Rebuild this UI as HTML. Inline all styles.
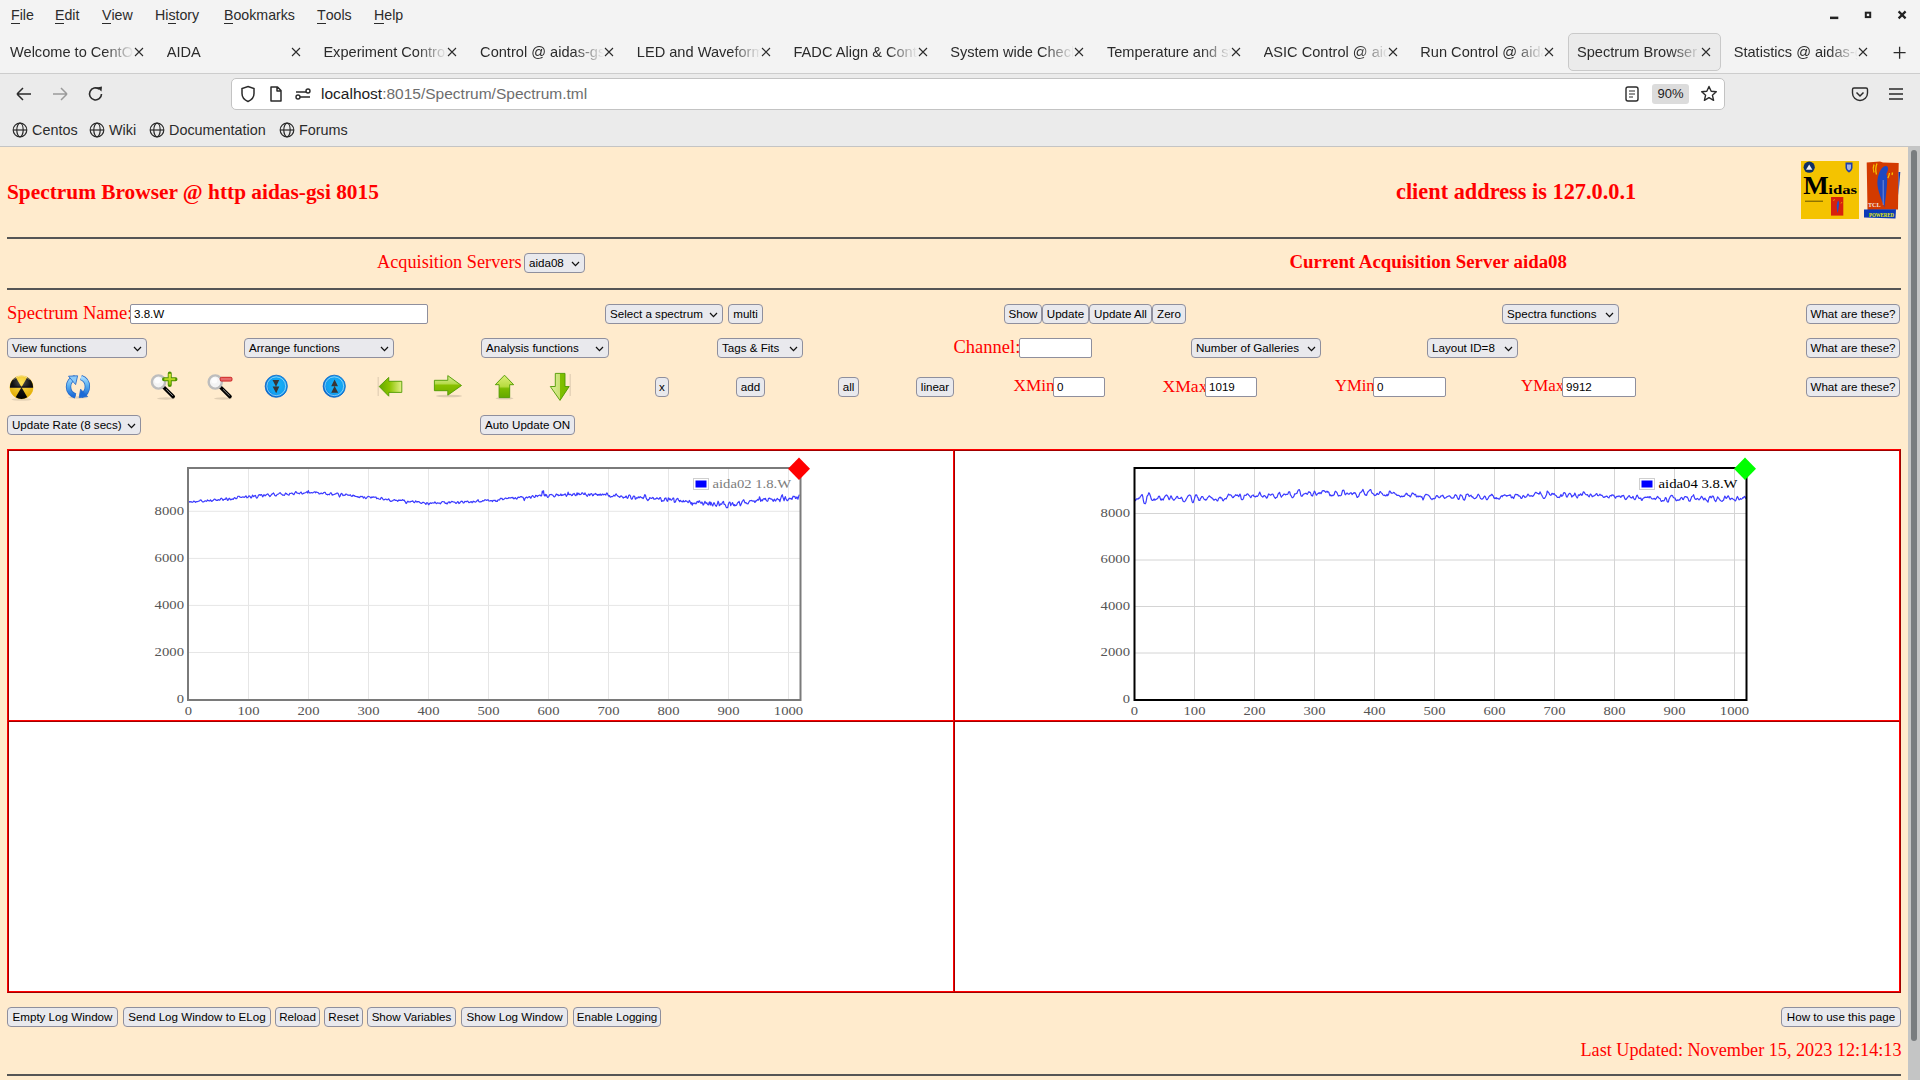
<!DOCTYPE html>
<html><head><meta charset="utf-8"><title>Spectrum Browser</title>
<style>
*{box-sizing:border-box}
html,body{margin:0;padding:0;width:1920px;height:1080px;overflow:hidden;background:#ffebcd}
body{position:relative;font-family:"Liberation Sans",sans-serif}
.a{position:absolute;white-space:nowrap}
#menubar{position:absolute;left:0;top:0;width:1920px;height:73px;background:#f3f3f3}
.mi{position:absolute;top:6px;font-size:14.2px;color:#2b2b2b;line-height:18px}
.mi u{text-decoration:none;border-bottom:1px solid #2b2b2b;display:inline-block;line-height:15px}
#tabline{position:absolute;left:0;top:73px;width:1920px;height:1px;background:#cdcdcd}
.tabt{position:absolute;top:43px;font-size:14.6px;color:#2b2b2b;width:124px;overflow:hidden;white-space:nowrap;line-height:18px;
 -webkit-mask-image:linear-gradient(to right,#000 0,#000 94px,transparent 124px);mask-image:linear-gradient(to right,#000 0,#000 94px,transparent 124px)}
.tabx{position:absolute;top:44px;width:12px;height:12px}
#acttab{position:absolute;left:1568px;top:33px;width:153px;height:38px;border:1px solid #c9c9c9;border-radius:5px;background:#ebebeb}
#navbar{position:absolute;left:0;top:74px;width:1920px;height:72px;background:#ebebeb}
#navline{position:absolute;left:0;top:146px;width:1920px;height:1px;background:#c4c4c4}
#url{position:absolute;left:231px;top:78px;width:1494px;height:32px;background:#fff;border:1px solid #c3c3c3;border-radius:5px}
.bm{position:absolute;top:121px;font-size:14.4px;color:#2b2b2b;line-height:18px}
/* page */
.red{color:#ff0000;font-family:"Liberation Serif",serif}
.h1{font-weight:bold;font-size:21.15px;line-height:24px}
.hr{position:absolute;left:7px;width:1894px;height:2px;background:#555}
.btn{position:absolute;height:20px;background:#e9e9ed;border:1px solid #8f8f9d;border-radius:4px;font-size:11.6px;color:#000;line-height:18px;text-align:center;white-space:nowrap;padding:0}
.sel{position:absolute;height:20px;background:#e9e9ed;border:1px solid #8f8f9d;border-radius:4px;font-size:11.6px;color:#000;line-height:18px;white-space:nowrap;padding-left:4px}
.sel svg{position:absolute;right:4px;top:6.5px}
.inp{position:absolute;height:20px;background:#fff;border:1px solid #8f8f9d;border-radius:2px;font-size:11.6px;color:#000;line-height:18px;white-space:nowrap;padding-left:3px}
.lab{position:absolute;font-family:"Liberation Serif",serif;color:#ff0000;font-size:18px;line-height:20px;white-space:nowrap}
#tbl{position:absolute;left:7px;top:449px;width:1894px;height:544px;border:1px solid;border-color:#ff0000 #a00000 #a00000 #ff0000;background:#fff}
.cell{position:absolute;border:1px solid;border-color:#a00000 #ff0000 #ff0000 #a00000}
svg text{font-family:"Liberation Serif",serif}
#scroll{position:absolute;left:1908px;top:147px;width:12px;height:933px;background:#c4c5c5}
#thumb{position:absolute;left:1911px;top:150px;width:6px;height:891px;background:#797d7f;border-radius:3px}
</style></head>
<body>
<!-- ================= browser chrome ================= -->
<div id="menubar"></div>
<div class="mi" style="left:11px"><u>F</u>ile</div>
<div class="mi" style="left:55px"><u>E</u>dit</div>
<div class="mi" style="left:102px"><u>V</u>iew</div>
<div class="mi" style="left:155px">Hi<u>s</u>tory</div>
<div class="mi" style="left:224px"><u>B</u>ookmarks</div>
<div class="mi" style="left:317px"><u>T</u>ools</div>
<div class="mi" style="left:374px"><u>H</u>elp</div>
<!-- window controls -->
<svg class="a" style="left:1820px;top:0" width="100" height="30" viewBox="1820 0 100 30">
 <rect x="1830" y="16.6" width="8.3" height="2.5" fill="#222"/>
 <rect x="1865.8" y="12.7" width="4.4" height="4.4" fill="none" stroke="#222" stroke-width="2"/>
 <path d="M1898.6 11.4L1905.6 18.4M1905.6 11.4L1898.6 18.4" stroke="#222" stroke-width="2.2"/>
</svg>
<div id="acttab"></div>
<div class="tabt" style="left:10.0px">Welcome to CentOS</div>
<div class="tabx" style="left:133.0px"><svg width="12" height="12" viewBox="0 0 12 12"><path d="M2 2L10 10M10 2L2 10" stroke="#2b2b2b" stroke-width="1.1"/></svg></div>
<div class="tabt" style="left:166.7px">AIDA</div>
<div class="tabx" style="left:289.7px"><svg width="12" height="12" viewBox="0 0 12 12"><path d="M2 2L10 10M10 2L2 10" stroke="#2b2b2b" stroke-width="1.1"/></svg></div>
<div class="tabt" style="left:323.4px">Experiment Control</div>
<div class="tabx" style="left:446.4px"><svg width="12" height="12" viewBox="0 0 12 12"><path d="M2 2L10 10M10 2L2 10" stroke="#2b2b2b" stroke-width="1.1"/></svg></div>
<div class="tabt" style="left:480.1px">Control @ aidas-gsi</div>
<div class="tabx" style="left:603.1px"><svg width="12" height="12" viewBox="0 0 12 12"><path d="M2 2L10 10M10 2L2 10" stroke="#2b2b2b" stroke-width="1.1"/></svg></div>
<div class="tabt" style="left:636.8px">LED and Waveform</div>
<div class="tabx" style="left:759.8px"><svg width="12" height="12" viewBox="0 0 12 12"><path d="M2 2L10 10M10 2L2 10" stroke="#2b2b2b" stroke-width="1.1"/></svg></div>
<div class="tabt" style="left:793.5px">FADC Align & Control</div>
<div class="tabx" style="left:916.5px"><svg width="12" height="12" viewBox="0 0 12 12"><path d="M2 2L10 10M10 2L2 10" stroke="#2b2b2b" stroke-width="1.1"/></svg></div>
<div class="tabt" style="left:950.2px">System wide Checks</div>
<div class="tabx" style="left:1073.2px"><svg width="12" height="12" viewBox="0 0 12 12"><path d="M2 2L10 10M10 2L2 10" stroke="#2b2b2b" stroke-width="1.1"/></svg></div>
<div class="tabt" style="left:1106.9px">Temperature and status</div>
<div class="tabx" style="left:1229.9px"><svg width="12" height="12" viewBox="0 0 12 12"><path d="M2 2L10 10M10 2L2 10" stroke="#2b2b2b" stroke-width="1.1"/></svg></div>
<div class="tabt" style="left:1263.6px">ASIC Control @ aidas</div>
<div class="tabx" style="left:1386.6px"><svg width="12" height="12" viewBox="0 0 12 12"><path d="M2 2L10 10M10 2L2 10" stroke="#2b2b2b" stroke-width="1.1"/></svg></div>
<div class="tabt" style="left:1420.3px">Run Control @ aidas</div>
<div class="tabx" style="left:1543.3px"><svg width="12" height="12" viewBox="0 0 12 12"><path d="M2 2L10 10M10 2L2 10" stroke="#2b2b2b" stroke-width="1.1"/></svg></div>
<div class="tabt" style="left:1577.0px">Spectrum Browser</div>
<div class="tabx" style="left:1700.0px"><svg width="12" height="12" viewBox="0 0 12 12"><path d="M2 2L10 10M10 2L2 10" stroke="#2b2b2b" stroke-width="1.1"/></svg></div>
<div class="tabt" style="left:1733.7px">Statistics @ aidas-gsi</div>
<div class="tabx" style="left:1856.7px"><svg width="12" height="12" viewBox="0 0 12 12"><path d="M2 2L10 10M10 2L2 10" stroke="#2b2b2b" stroke-width="1.1"/></svg></div>
<svg class="a" style="left:1891px;top:44px" width="16" height="16"><path d="M8.6 2.7V14.7M2.6 8.7H14.6" stroke="#2b2b2b" stroke-width="1.3"/></svg>
<div id="tabline"></div>
<div id="navbar"></div>
<!-- back / forward / reload -->
<svg class="a" style="left:14px;top:85px" width="20" height="18" viewBox="0 0 20 18"><path d="M3 9H17M3 9L9 3M3 9L9 15" stroke="#2b2b2b" stroke-width="1.5" fill="none"/></svg>
<svg class="a" style="left:50px;top:85px" width="20" height="18" viewBox="0 0 20 18"><path d="M17 9H3M17 9L11 3M17 9L11 15" stroke="#9a9a9a" stroke-width="1.5" fill="none"/></svg>
<svg class="a" style="left:86px;top:84px" width="20" height="20" viewBox="0 0 20 20"><path d="M15.5 10A6 6 0 1 1 13.2 5.2" stroke="#2b2b2b" stroke-width="1.6" fill="none"/><path d="M11 3.5L16 2.5L15.5 7.5Z" fill="#2b2b2b"/></svg>
<div id="url"></div>
<svg class="a" style="left:238px;top:84px" width="20" height="20" viewBox="0 0 20 20"><path d="M10 2.5L16 4.5V9.5C16 13.5 13.5 16 10 17.5C6.5 16 4 13.5 4 9.5V4.5Z" stroke="#2b2b2b" stroke-width="1.5" fill="none"/></svg>
<svg class="a" style="left:266px;top:84px" width="20" height="20" viewBox="0 0 20 20"><path d="M5 3H11.5L15 6.5V17H5Z M11 3V7H15" stroke="#2b2b2b" stroke-width="1.5" fill="none" stroke-linejoin="round"/></svg>
<svg class="a" style="left:293px;top:84px" width="20" height="20" viewBox="0 0 20 20"><path d="M3 8H13M7 13H17" stroke="#2b2b2b" stroke-width="1.5"/><circle cx="15" cy="7" r="2" stroke="#2b2b2b" stroke-width="1.4" fill="none"/><circle cx="5" cy="13" r="2" stroke="#2b2b2b" stroke-width="1.4" fill="none"/></svg>
<div class="a" style="left:321px;top:85px;font-size:15.5px;line-height:18px;color:#1c1b22">localhost<span style="color:#6d6d6d">:8015/Spectrum/Spectrum.tml</span></div>
<svg class="a" style="left:1622px;top:84px" width="20" height="20" viewBox="0 0 20 20"><rect x="4" y="3" width="12" height="14" rx="2" stroke="#2b2b2b" stroke-width="1.4" fill="none"/><path d="M7 7H13M7 10H13M7 13H11" stroke="#2b2b2b" stroke-width="1.2"/></svg>
<div class="a" style="left:1652px;top:84px;width:37px;height:20px;background:#dcdcdc;border-radius:3px;font-size:13px;line-height:20px;text-align:center;color:#1c1b22">90%</div>
<svg class="a" style="left:1699px;top:84px" width="20" height="20" viewBox="0 0 20 20"><path d="M10 2.5L12.2 7.3L17.3 7.8L13.4 11.2L14.6 16.3L10 13.6L5.4 16.3L6.6 11.2L2.7 7.8L7.8 7.3Z" stroke="#2b2b2b" stroke-width="1.4" fill="none" stroke-linejoin="round"/></svg>
<svg class="a" style="left:1850px;top:84px" width="20" height="20" viewBox="0 0 20 20"><path d="M4 4H16A1.5 1.5 0 0 1 17.5 5.5V9A7.5 7.5 0 0 1 2.5 9V5.5A1.5 1.5 0 0 1 4 4Z" stroke="#2b2b2b" stroke-width="1.4" fill="none"/><path d="M6.5 8.5L10 12L13.5 8.5" stroke="#2b2b2b" stroke-width="1.5" fill="none"/></svg>
<svg class="a" style="left:1886px;top:84px" width="20" height="20" viewBox="0 0 20 20"><path d="M3 5H17M3 10H17M3 15H17" stroke="#2b2b2b" stroke-width="1.5"/></svg>
<!-- bookmarks -->
<svg class="a" style="left:12px;top:122px" width="16" height="16" viewBox="0 0 16 16"><g stroke="#2b2b2b" stroke-width="1.2" fill="none"><circle cx="8" cy="8" r="6.8"/><ellipse cx="8" cy="8" rx="3.2" ry="6.8"/><path d="M1.2 8H14.8"/></g></svg>
<div class="bm" style="left:32px">Centos</div>
<svg class="a" style="left:89px;top:122px" width="16" height="16" viewBox="0 0 16 16"><g stroke="#2b2b2b" stroke-width="1.2" fill="none"><circle cx="8" cy="8" r="6.8"/><ellipse cx="8" cy="8" rx="3.2" ry="6.8"/><path d="M1.2 8H14.8"/></g></svg>
<div class="bm" style="left:109px">Wiki</div>
<svg class="a" style="left:149px;top:122px" width="16" height="16" viewBox="0 0 16 16"><g stroke="#2b2b2b" stroke-width="1.2" fill="none"><circle cx="8" cy="8" r="6.8"/><ellipse cx="8" cy="8" rx="3.2" ry="6.8"/><path d="M1.2 8H14.8"/></g></svg>
<div class="bm" style="left:169px">Documentation</div>
<svg class="a" style="left:279px;top:122px" width="16" height="16" viewBox="0 0 16 16"><g stroke="#2b2b2b" stroke-width="1.2" fill="none"><circle cx="8" cy="8" r="6.8"/><ellipse cx="8" cy="8" rx="3.2" ry="6.8"/><path d="M1.2 8H14.8"/></g></svg>
<div class="bm" style="left:299px">Forums</div>
<div id="navline"></div>

<!-- ================= page ================= -->
<div class="a red h1" style="left:7px;top:180px;font-size:21.35px">Spectrum Browser @ http aidas-gsi 8015</div>
<div class="a red h1" style="left:1396px;top:180px;font-size:22.34px">client address is 127.0.0.1</div>
<!-- logos -->
<svg class="a" style="left:1790px;top:150px" width="118" height="80" viewBox="1790 150 118 80">
 <rect x="1801" y="161" width="58" height="58" fill="#f4c300"/>
 <circle cx="1809.2" cy="167.2" r="5.6" fill="#0f2f66"/>
 <path d="M1806 169.8L1809.2 164.6L1812.4 169.8Z" fill="#f0f0f0"/>
 <path d="M1845.5 162.5H1852.5V167.5C1852.5 170.5 1849 172.5 1849 172.5C1849 172.5 1845.5 170.5 1845.5 167.5Z" fill="#1d3fb0"/>
 <path d="M1847 164.5H1851V167.8C1851 169.5 1849 170.6 1849 170.6C1849 170.6 1847 169.5 1847 167.8Z" fill="#fff" opacity="0.6"/>
 <text x="1803.2" y="193.7" font-family="Liberation Serif" font-weight="bold" font-size="26" fill="#000" textLength="25.5" lengthAdjust="spacingAndGlyphs">M</text>
 <text x="1828.3" y="193.7" font-family="Liberation Sans" font-weight="bold" font-size="13.2" fill="#000" textLength="28.8" lengthAdjust="spacingAndGlyphs">idas</text>
 <rect x="1805" y="200.6" width="18" height="1.3" fill="#3a3000" opacity="0.6"/>
 <rect x="1831" y="197" width="12.3" height="18.6" fill="#d8200c"/>
 <path d="M1838.2 200.5C1839.8 202 1839 207 1837.6 213C1836.6 208 1836 204 1838.2 200.5Z" fill="#2a4cc0"/>
 <path d="M1833.5 201L1834.5 199M1841 203.5L1842 202" stroke="#f0c000" stroke-width="0.7"/>
 <path d="M1866.7 162.5L1880 161.5L1883 162.5L1898.7 163L1898 209.5L1867.5 210Z" fill="#d33a00"/>
 <path d="M1864 209.5L1896 209.3L1895.5 218.5L1864 217.5Z" fill="#0a3ab8"/>
 <path d="M1898.5 172L1900.3 172L1898.4 195Z" fill="#0a3ab8"/>
 <path d="M1886 166C1889 166.5 1888.5 170 1886.2 174.5C1888 175.5 1887.5 186 1884.5 207.5C1880 196 1876.5 187 1877.5 180C1878.5 172 1882 166 1886 166Z" fill="#1f48c0"/>
 <path d="M1883.2 180V205" stroke="#c8d0f0" stroke-width="0.5"/>
 <path d="M1874 164.5C1873 167 1873 170 1874 172.5M1877 163.5C1875.5 167 1875.5 171 1876.5 174.5M1889.5 173C1889.2 175 1888.6 177 1887.8 178M1892.5 172.5L1892 175" stroke="#f6c400" stroke-width="1.3" fill="none"/>
 <text x="1868" y="207.3" font-family="Liberation Sans" font-weight="bold" font-size="6" fill="#f4e8e0" textLength="12.7" lengthAdjust="spacingAndGlyphs">TCL</text>
 <text x="1869" y="216.8" font-family="Liberation Sans" font-weight="bold" font-size="6" fill="#e8f000" textLength="25" lengthAdjust="spacingAndGlyphs">POWERED</text>
</svg>
<div class="hr" style="top:237px"></div>
<div class="lab" style="left:377px;top:252px;font-size:18.27px">Acquisition Servers</div>
<div class="sel" style="left:524px;top:253px;width:61px">aida08<svg width="9" height="6" viewBox="0 0 9 6"><path d="M1 1L4.5 4.6L8 1" stroke="#111" stroke-width="1.25" fill="none"/></svg></div>
<div class="a red h1" style="left:1289.5px;top:250px;font-size:18.88px">Current Acquisition Server aida08</div>
<div class="hr" style="top:288px"></div>

<!-- row 1 -->
<div class="lab" style="left:7px;top:303px;font-size:18.6px">Spectrum Name:</div>
<div class="inp" style="left:130px;top:304px;width:298px">3.8.W</div>
<div class="sel" style="left:605px;top:304px;width:118px">Select a spectrum<svg width="9" height="6" viewBox="0 0 9 6"><path d="M1 1L4.5 4.6L8 1" stroke="#111" stroke-width="1.25" fill="none"/></svg></div>
<div class="btn" style="left:728px;top:304px;width:35px">multi</div>
<div class="btn" style="left:1004px;top:304px;width:38px">Show</div>
<div class="btn" style="left:1042px;top:304px;width:47px">Update</div>
<div class="btn" style="left:1089px;top:304px;width:63px">Update All</div>
<div class="btn" style="left:1152px;top:304px;width:34px">Zero</div>
<div class="sel" style="left:1502px;top:304px;width:117px">Spectra functions<svg width="9" height="6" viewBox="0 0 9 6"><path d="M1 1L4.5 4.6L8 1" stroke="#111" stroke-width="1.25" fill="none"/></svg></div>
<div class="btn" style="left:1806px;top:304px;width:94px">What are these?</div>

<!-- row 2 -->
<div class="sel" style="left:7px;top:338px;width:140px">View functions<svg width="9" height="6" viewBox="0 0 9 6"><path d="M1 1L4.5 4.6L8 1" stroke="#111" stroke-width="1.25" fill="none"/></svg></div>
<div class="sel" style="left:244px;top:338px;width:150px">Arrange functions<svg width="9" height="6" viewBox="0 0 9 6"><path d="M1 1L4.5 4.6L8 1" stroke="#111" stroke-width="1.25" fill="none"/></svg></div>
<div class="sel" style="left:481px;top:338px;width:128px">Analysis functions<svg width="9" height="6" viewBox="0 0 9 6"><path d="M1 1L4.5 4.6L8 1" stroke="#111" stroke-width="1.25" fill="none"/></svg></div>
<div class="sel" style="left:717px;top:338px;width:86px">Tags &amp; Fits<svg width="9" height="6" viewBox="0 0 9 6"><path d="M1 1L4.5 4.6L8 1" stroke="#111" stroke-width="1.25" fill="none"/></svg></div>
<div class="lab" style="left:953.5px;top:337px;font-size:18.5px">Channel:</div>
<div class="inp" style="left:1019px;top:338px;width:73px"></div>
<div class="sel" style="left:1191px;top:338px;width:130px">Number of Galleries<svg width="9" height="6" viewBox="0 0 9 6"><path d="M1 1L4.5 4.6L8 1" stroke="#111" stroke-width="1.25" fill="none"/></svg></div>
<div class="sel" style="left:1427px;top:338px;width:91px">Layout ID=8<svg width="9" height="6" viewBox="0 0 9 6"><path d="M1 1L4.5 4.6L8 1" stroke="#111" stroke-width="1.25" fill="none"/></svg></div>
<div class="btn" style="left:1806px;top:338px;width:94px">What are these?</div>

<!-- row 3 icons -->
<svg class="a" style="left:0;top:360px" width="600" height="50" viewBox="0 360 600 50">
 <defs>
  <radialGradient id="gy" cx="50%" cy="30%" r="70%"><stop offset="0" stop-color="#ffe45a"/><stop offset="1" stop-color="#e0a800"/></radialGradient>
  <radialGradient id="gk" cx="50%" cy="20%" r="80%"><stop offset="0" stop-color="#555"/><stop offset="0.5" stop-color="#111"/><stop offset="1" stop-color="#000"/></radialGradient>
  <linearGradient id="gb" x1="0" y1="0" x2="0" y2="1"><stop offset="0" stop-color="#a8dcff"/><stop offset="0.45" stop-color="#5ab0f0"/><stop offset="1" stop-color="#1a6ad8"/></linearGradient>
  <radialGradient id="gc" cx="55%" cy="45%" r="55%"><stop offset="0" stop-color="#18b4f8"/><stop offset="0.75" stop-color="#12a0f0"/><stop offset="1" stop-color="#0a6ad0"/></radialGradient>
  <linearGradient id="ggl" x1="0" y1="0" x2="1" y2="0"><stop offset="0" stop-color="#62a800"/><stop offset="0.45" stop-color="#8cc400"/><stop offset="1" stop-color="#e4f08a"/></linearGradient>
  <linearGradient id="ggr" x1="0" y1="0" x2="0" y2="1"><stop offset="0" stop-color="#d8ec98"/><stop offset="0.4" stop-color="#b8dc50"/><stop offset="0.5" stop-color="#88c000"/><stop offset="1" stop-color="#72b000"/></linearGradient>
  <linearGradient id="ggu" x1="0" y1="0" x2="0" y2="1"><stop offset="0" stop-color="#dcee78"/><stop offset="0.5" stop-color="#b8dc40"/><stop offset="0.6" stop-color="#7cbc00"/><stop offset="1" stop-color="#64a800"/></linearGradient>
  <linearGradient id="ggd" x1="0" y1="0" x2="1" y2="0"><stop offset="0" stop-color="#e0f0a0"/><stop offset="0.5" stop-color="#c8e070"/><stop offset="0.52" stop-color="#80c000"/><stop offset="1" stop-color="#78b800"/></linearGradient>
  <linearGradient id="ggp" x1="0" y1="0" x2="0" y2="1"><stop offset="0" stop-color="#e8f040"/><stop offset="1" stop-color="#88c000"/></linearGradient>
 </defs>
 <!-- radiation -->
 <ellipse cx="21.5" cy="399.5" rx="10" ry="1.3" fill="#000" opacity="0.10"/>
 <circle cx="21.5" cy="387.3" r="11.6" fill="url(#gy)" stroke="#e8b800" stroke-width="0.5"/>
 <path d="M21.5 387.3L33.1 387.3A11.6 11.6 0 0 0 27.3 377.25Z M21.5 387.3L15.7 377.25A11.6 11.6 0 0 0 9.9 387.3Z M21.5 387.3L15.7 397.35A11.6 11.6 0 0 0 27.3 397.35Z" fill="url(#gk)"/>
 <rect x="10" y="386.5" width="23" height="1.3" fill="#0a0a20" opacity="0.85"/>
 <path d="M13.5 380A10 10 0 0 1 29.5 380" stroke="#fff" stroke-width="0.9" fill="none" opacity="0.45"/>
 <!-- refresh -->
 <ellipse cx="78" cy="397.5" rx="10" ry="1.2" fill="#000" opacity="0.10"/>
 <path d="M75.2 377.6A9.6 9.6 0 0 0 75.5 396" stroke="#2a6cc8" stroke-width="5.4" fill="none"/>
 <path d="M75.2 377.6A9.6 9.6 0 0 0 75.5 396" stroke="url(#gb)" stroke-width="3.8" fill="none"/>
 <path d="M68.5 376.2L77.6 375.8L75.6 384.6Z" fill="#8ccaf8" stroke="#2a6cc8" stroke-width="0.9" stroke-linejoin="round"/>
 <path d="M81 377.5A9.6 9.6 0 0 1 81.2 395.5" stroke="#2a6cc8" stroke-width="5.4" fill="none"/>
 <path d="M81 377.5A9.6 9.6 0 0 1 81.2 395.5" stroke="url(#gb)" stroke-width="3.8" fill="none"/>
 <path d="M79.2 397.6L87.6 396.5L80.6 389.2Z" fill="#1a6ad8" stroke="#2a6cc8" stroke-width="0.9" stroke-linejoin="round"/>
 <!-- zoom in -->
 <ellipse cx="166" cy="398.5" rx="9" ry="1.2" fill="#000" opacity="0.12"/>
 <path d="M163.5 387L173.2 396.6" stroke="#000" stroke-width="3.6" stroke-linecap="round"/>
 <path d="M166.2 389.3L172.8 395.8" stroke="#fff" stroke-width="0.8" opacity="0.7"/>
 <circle cx="158.5" cy="382" r="6.6" fill="#f4f4f4" stroke="#bdbdbd" stroke-width="2.4"/>
 <circle cx="157.5" cy="380.5" r="3" fill="#fff" opacity="0.8"/>
 <path d="M169.75 373.5V385M164 379.25H175.5" stroke="#4c9000" stroke-width="4" stroke-linecap="round"/>
 <path d="M169.75 373.8V384.7M164.3 379.25H175.2" stroke="url(#ggp)" stroke-width="2.2"/>
 <!-- zoom out -->
 <ellipse cx="223" cy="398.5" rx="9" ry="1.2" fill="#000" opacity="0.12"/>
 <path d="M220.3 387L230 396.6" stroke="#000" stroke-width="3.6" stroke-linecap="round"/>
 <path d="M223 389.3L229.6 395.8" stroke="#fff" stroke-width="0.8" opacity="0.7"/>
 <circle cx="215.25" cy="382" r="6.6" fill="#f4f4f4" stroke="#bdbdbd" stroke-width="2.4"/>
 <circle cx="214.3" cy="380.5" r="3" fill="#fff" opacity="0.8"/>
 <rect x="220.2" y="377.3" width="11.8" height="3.8" rx="1.2" fill="#e86a6a" stroke="#c81818" stroke-width="0.9"/>
 <!-- blue down -->
 <circle cx="276.25" cy="386.25" r="11.1" fill="url(#gc)" stroke="#0a64c8" stroke-width="0.8"/>
 <circle cx="276.25" cy="386.25" r="9.4" fill="none" stroke="#c8ecff" stroke-width="0.7" opacity="0.9"/>
 <path d="M272.5 380H279.2L276 386.8Z M272.6 386.4H279.3L276.2 393.2Z" fill="#3a3535"/>
 <!-- blue up -->
 <circle cx="334.25" cy="386.25" r="11.1" fill="url(#gc)" stroke="#0a64c8" stroke-width="0.8"/>
 <circle cx="334.25" cy="386.25" r="9.4" fill="none" stroke="#c8ecff" stroke-width="0.7" opacity="0.9"/>
 <path d="M331.2 386.3H338L334.6 379.6Z M331.2 392.8H338.2L334.6 386Z" fill="#3a3535"/>
 <!-- left arrow -->
 <rect x="377.6" y="377" width="1.2" height="19" fill="#000" opacity="0.12"/>
 <path d="M379.2 386.5L388.75 377.4V381.3H401.8V392.4H388.75V396.2Z" fill="url(#ggl)" stroke="#4e9a00" stroke-width="0.9" stroke-linejoin="round"/>
 <!-- right arrow -->
 <ellipse cx="449" cy="396" rx="13" ry="1.3" fill="#000" opacity="0.13"/>
 <path d="M461.5 385.5L447.8 375.6V380.3H434.4V390.7H447.8V395.2Z" fill="url(#ggr)" stroke="#4e9a00" stroke-width="0.9" stroke-linejoin="round"/>
 <!-- up arrow -->
 <ellipse cx="504.5" cy="398.3" rx="9" ry="1.2" fill="#000" opacity="0.13"/>
 <path d="M504.5 375.2L513.7 384.7H509.7V397.6H499.1V384.7H495.3Z" fill="url(#ggu)" stroke="#4e9a00" stroke-width="0.9" stroke-linejoin="round"/>
 <!-- down arrow -->
 <rect x="569.6" y="374" width="1.2" height="22" fill="#000" opacity="0.12"/>
 <path d="M560 400.4L569.2 386.5H565V373.4H555.3V386.5H550.3Z" fill="url(#ggd)" stroke="#4e9a00" stroke-width="0.9" stroke-linejoin="round"/>
</svg>
<div class="btn" style="left:655px;top:377px;width:14px">x</div>
<div class="btn" style="left:736px;top:377px;width:29px">add</div>
<div class="btn" style="left:838px;top:377px;width:21px">all</div>
<div class="btn" style="left:916px;top:377px;width:38px">linear</div>
<div class="lab" style="left:1013.5px;top:376px;font-size:17.2px">XMin</div>
<div class="inp" style="left:1053px;top:377px;width:52px">0</div>
<div class="lab" style="left:1162.5px;top:376px;font-size:17.6px">XMax</div>
<div class="inp" style="left:1205px;top:377px;width:52px">1019</div>
<div class="lab" style="left:1335px;top:376px;font-size:16.6px">YMin</div>
<div class="inp" style="left:1373px;top:377px;width:73px">0</div>
<div class="lab" style="left:1521px;top:376px;font-size:16.9px">YMax</div>
<div class="inp" style="left:1562px;top:377px;width:74px">9912</div>
<div class="btn" style="left:1806px;top:377px;width:94px">What are these?</div>

<!-- row 4 -->
<div class="sel" style="left:7px;top:415px;width:134px">Update Rate (8 secs)<svg width="9" height="6" viewBox="0 0 9 6"><path d="M1 1L4.5 4.6L8 1" stroke="#111" stroke-width="1.25" fill="none"/></svg></div>
<div class="btn" style="left:480px;top:415px;width:95px">Auto Update ON</div>

<!-- ================= gallery table ================= -->
<div id="tbl"></div>
<div class="cell" style="left:8px;top:450px;width:946px;height:271px"></div>
<div class="cell" style="left:954px;top:450px;width:946px;height:271px"></div>
<div class="cell" style="left:8px;top:721px;width:946px;height:271px"></div>
<div class="cell" style="left:954px;top:721px;width:946px;height:271px"></div>

<svg class="a" style="left:0;top:0" width="1920" height="1080" viewBox="0 0 1920 1080">
 <g><line x1="248.5" y1="467.5" x2="248.5" y2="699.5" stroke="#e6e6e6" stroke-width="1"/>
<line x1="308.5" y1="467.5" x2="308.5" y2="699.5" stroke="#e6e6e6" stroke-width="1"/>
<line x1="368.5" y1="467.5" x2="368.5" y2="699.5" stroke="#e6e6e6" stroke-width="1"/>
<line x1="428.5" y1="467.5" x2="428.5" y2="699.5" stroke="#e6e6e6" stroke-width="1"/>
<line x1="488.5" y1="467.5" x2="488.5" y2="699.5" stroke="#e6e6e6" stroke-width="1"/>
<line x1="548.5" y1="467.5" x2="548.5" y2="699.5" stroke="#e6e6e6" stroke-width="1"/>
<line x1="608.5" y1="467.5" x2="608.5" y2="699.5" stroke="#e6e6e6" stroke-width="1"/>
<line x1="668.5" y1="467.5" x2="668.5" y2="699.5" stroke="#e6e6e6" stroke-width="1"/>
<line x1="728.5" y1="467.5" x2="728.5" y2="699.5" stroke="#e6e6e6" stroke-width="1"/>
<line x1="788.5" y1="467.5" x2="788.5" y2="699.5" stroke="#e6e6e6" stroke-width="1"/>
<line x1="188" y1="652.5" x2="800.5" y2="652.5" stroke="#e6e6e6" stroke-width="1"/>
<line x1="188" y1="605.4" x2="800.5" y2="605.4" stroke="#e6e6e6" stroke-width="1"/>
<line x1="188" y1="558.4" x2="800.5" y2="558.4" stroke="#e6e6e6" stroke-width="1"/>
<line x1="188" y1="511.3" x2="800.5" y2="511.3" stroke="#e6e6e6" stroke-width="1"/></g>
 <g><line x1="1194.5" y1="467.5" x2="1194.5" y2="699.5" stroke="#d4d4d4" stroke-width="1"/>
<line x1="1254.5" y1="467.5" x2="1254.5" y2="699.5" stroke="#d4d4d4" stroke-width="1"/>
<line x1="1314.5" y1="467.5" x2="1314.5" y2="699.5" stroke="#d4d4d4" stroke-width="1"/>
<line x1="1374.5" y1="467.5" x2="1374.5" y2="699.5" stroke="#d4d4d4" stroke-width="1"/>
<line x1="1434.5" y1="467.5" x2="1434.5" y2="699.5" stroke="#d4d4d4" stroke-width="1"/>
<line x1="1494.5" y1="467.5" x2="1494.5" y2="699.5" stroke="#d4d4d4" stroke-width="1"/>
<line x1="1554.5" y1="467.5" x2="1554.5" y2="699.5" stroke="#d4d4d4" stroke-width="1"/>
<line x1="1614.5" y1="467.5" x2="1614.5" y2="699.5" stroke="#d4d4d4" stroke-width="1"/>
<line x1="1674.5" y1="467.5" x2="1674.5" y2="699.5" stroke="#d4d4d4" stroke-width="1"/>
<line x1="1734.5" y1="467.5" x2="1734.5" y2="699.5" stroke="#d4d4d4" stroke-width="1"/>
<line x1="1134" y1="653.0" x2="1746.5" y2="653.0" stroke="#d4d4d4" stroke-width="1"/>
<line x1="1134" y1="606.5" x2="1746.5" y2="606.5" stroke="#d4d4d4" stroke-width="1"/>
<line x1="1134" y1="560.0" x2="1746.5" y2="560.0" stroke="#d4d4d4" stroke-width="1"/>
<line x1="1134" y1="513.5" x2="1746.5" y2="513.5" stroke="#d4d4d4" stroke-width="1"/></g>
 <polyline points="188.3,502.00 188.9,501.79 189.5,502.08 190.1,501.57 190.7,501.88 191.3,501.70 191.9,502.18 192.5,502.28 193.1,501.96 193.7,501.15 194.3,501.37 194.9,501.62 195.5,502.36 196.1,501.83 196.7,501.62 197.3,501.56 197.9,501.43 198.5,501.27 199.1,501.14 199.7,500.64 200.3,500.01 200.9,499.92 201.5,500.54 202.1,501.54 202.7,501.89 203.3,501.89 203.9,501.61 204.5,501.30 205.1,500.83 205.7,500.81 206.3,501.43 206.9,500.83 207.5,499.91 208.1,500.70 208.7,500.71 209.3,500.84 209.9,500.87 210.5,499.78 211.1,500.71 211.7,501.47 212.3,500.95 212.9,500.59 213.5,500.08 214.1,499.23 214.7,499.05 215.3,499.42 215.9,500.16 216.5,500.45 217.1,500.13 217.7,500.45 218.3,499.70 218.9,499.79 219.5,500.26 220.1,499.87 220.7,498.60 221.3,498.11 221.9,498.66 222.5,499.42 223.1,500.40 223.7,499.64 224.3,499.20 224.9,499.38 225.5,499.21 226.1,497.81 226.7,498.33 227.3,499.96 227.9,500.45 228.5,499.31 229.1,498.44 229.7,498.35 230.3,499.69 230.9,499.82 231.5,499.22 232.1,499.40 232.7,498.82 233.3,499.27 233.9,498.44 234.5,497.67 235.1,497.87 235.7,498.60 236.3,498.71 236.9,498.36 237.5,496.87 238.1,496.27 238.7,496.24 239.3,496.40 239.9,497.11 240.5,497.14 241.1,497.52 241.7,497.43 242.3,496.99 242.9,496.87 243.5,497.05 244.1,497.44 244.7,497.00 245.3,496.62 245.9,495.83 246.5,496.84 247.1,497.84 247.7,497.52 248.3,496.79 248.9,495.86 249.5,496.04 250.1,496.49 250.7,497.85 251.3,497.82 251.9,496.84 252.5,495.12 253.1,495.99 253.7,496.59 254.3,495.85 254.9,495.98 255.5,495.34 256.1,497.43 256.7,498.12 257.3,497.74 257.9,496.80 258.5,495.05 259.1,494.90 259.7,494.52 260.3,495.35 260.9,494.69 261.5,494.50 262.1,495.63 262.7,496.84 263.3,495.98 263.9,494.68 264.5,495.09 265.1,495.78 265.7,495.24 266.3,494.69 266.9,494.37 267.5,493.97 268.1,493.98 268.7,495.09 269.3,495.71 269.9,496.59 270.5,495.99 271.1,495.17 271.7,494.19 272.3,494.05 272.9,493.59 273.5,492.97 274.1,493.89 274.7,495.23 275.3,495.76 275.9,496.05 276.5,495.56 277.1,494.54 277.7,494.25 278.3,494.07 278.9,493.62 279.5,492.98 280.1,492.68 280.7,493.40 281.3,494.17 281.9,494.27 282.5,495.11 283.1,495.11 283.7,495.07 284.3,495.35 284.9,494.50 285.5,493.08 286.1,493.56 286.7,493.62 287.3,494.55 287.9,494.79 288.5,495.04 289.1,495.03 289.7,493.41 290.3,493.52 290.9,493.33 291.5,493.07 292.1,493.06 292.7,493.74 293.3,494.35 293.9,494.70 294.5,493.38 295.1,492.70 295.7,491.56 296.3,491.98 296.9,493.03 297.5,493.04 298.1,493.25 298.7,493.39 299.3,493.84 299.9,493.19 300.5,492.48 301.1,492.10 301.7,493.31 302.3,494.08 302.9,493.70 303.5,493.33 304.1,493.06 304.7,492.98 305.3,492.77 305.9,492.55 306.5,491.93 307.1,491.80 307.7,493.08 308.3,490.62 308.9,491.93 309.5,492.97 310.1,492.79 310.7,492.93 311.3,492.59 311.9,492.71 312.5,492.95 313.1,492.61 313.7,492.23 314.3,491.93 314.9,491.77 315.5,492.77 316.1,491.97 316.7,492.11 317.3,492.31 317.9,492.46 318.5,492.92 319.1,493.83 319.7,493.92 320.3,493.64 320.9,493.14 321.5,493.09 322.1,493.77 322.7,493.69 323.3,493.05 323.9,492.49 324.5,492.33 325.1,492.23 325.7,493.53 326.3,494.30 326.9,494.25 327.5,494.90 328.1,494.37 328.7,494.49 329.3,494.79 329.9,493.79 330.5,492.87 331.1,492.75 331.7,493.90 332.3,495.14 332.9,494.51 333.5,494.82 334.1,494.52 334.7,494.18 335.3,493.91 335.9,493.91 336.5,493.21 337.1,493.05 337.7,493.01 338.3,493.93 338.9,495.57 339.5,497.02 340.1,496.13 340.7,494.22 341.3,493.59 341.9,493.37 342.5,494.93 343.1,495.59 343.7,495.01 344.3,495.22 344.9,495.39 345.5,494.36 346.1,494.04 346.7,494.27 347.3,494.73 347.9,495.14 348.5,495.14 349.1,495.33 349.7,495.11 350.3,494.75 350.9,495.82 351.5,496.27 352.1,496.40 352.7,495.34 353.3,495.20 353.9,495.97 354.5,495.58 355.1,496.32 355.7,496.32 356.3,496.55 356.9,496.50 357.5,496.61 358.1,497.27 358.7,496.98 359.3,497.61 359.9,497.02 360.5,496.28 361.1,496.73 361.7,496.43 362.3,496.42 362.9,497.20 363.5,498.05 364.1,496.96 364.7,497.01 365.3,498.12 365.9,498.69 366.5,498.08 367.1,497.21 367.7,496.82 368.3,496.31 368.9,496.46 369.5,496.80 370.1,497.06 370.7,497.90 371.3,497.79 371.9,496.82 372.5,497.37 373.1,497.04 373.7,496.94 374.3,497.15 374.9,497.28 375.5,497.01 376.1,497.17 376.7,498.71 377.3,498.52 377.9,498.19 378.5,498.67 379.1,499.01 379.7,499.21 380.3,499.37 380.9,498.00 381.5,497.42 382.1,497.92 382.7,498.75 383.3,499.77 383.9,499.99 384.5,499.54 385.1,499.28 385.7,499.12 386.3,499.34 386.9,499.85 387.5,499.71 388.1,499.24 388.7,498.89 389.3,499.82 389.9,500.83 390.5,501.29 391.1,501.32 391.7,501.24 392.3,500.73 392.9,500.72 393.5,499.97 394.1,499.81 394.7,499.64 395.3,500.33 395.9,500.29 396.5,500.30 397.1,500.59 397.7,501.35 398.3,500.76 398.9,499.96 399.5,500.40 400.1,500.00 400.7,500.37 401.3,500.27 401.9,500.34 402.5,499.53 403.1,500.19 403.7,500.38 404.3,500.14 404.9,501.49 405.5,502.00 406.1,503.53 406.7,503.06 407.3,501.83 407.9,501.21 408.5,501.89 409.1,501.83 409.7,501.85 410.3,501.97 410.9,501.35 411.5,501.37 412.1,501.29 412.7,500.86 413.3,501.68 413.9,502.44 414.5,502.55 415.1,501.94 415.7,500.85 416.3,501.47 416.9,502.05 417.5,501.55 418.1,501.85 418.7,501.51 419.3,501.96 419.9,502.56 420.5,503.08 421.1,503.28 421.7,503.30 422.3,502.58 422.9,502.40 423.5,502.41 424.1,502.64 424.7,503.11 425.3,503.63 425.9,504.48 426.5,502.82 427.1,502.74 427.7,502.86 428.3,504.29 428.9,504.75 429.5,503.34 430.1,503.10 430.7,502.82 431.3,503.47 431.9,503.00 432.5,502.92 433.1,502.97 433.7,503.04 434.3,502.83 434.9,501.96 435.5,502.49 436.1,503.48 436.7,503.58 437.3,502.86 437.9,502.85 438.5,503.25 439.1,503.18 439.7,503.08 440.3,503.75 440.9,503.01 441.5,502.46 442.1,501.50 442.7,501.48 443.3,501.72 443.9,501.81 444.5,501.93 445.1,503.32 445.7,503.38 446.3,503.05 446.9,503.96 447.5,503.63 448.1,502.17 448.7,502.17 449.3,501.89 449.9,503.01 450.5,502.50 451.1,502.08 451.7,501.33 452.3,501.72 452.9,501.67 453.5,502.02 454.1,502.15 454.7,502.03 455.3,502.71 455.9,503.31 456.5,503.15 457.1,502.32 457.7,501.58 458.3,501.91 458.9,503.54 459.5,503.30 460.1,502.42 460.7,501.80 461.3,501.32 461.9,501.16 462.5,501.56 463.1,502.80 463.7,502.95 464.3,502.41 464.9,501.31 465.5,501.50 466.1,501.84 466.7,501.41 467.3,501.00 467.9,501.31 468.5,502.23 469.1,502.68 469.7,502.53 470.3,501.96 470.9,501.84 471.5,501.70 472.1,502.75 472.7,501.90 473.3,501.24 473.9,501.78 474.5,501.59 475.1,502.14 475.7,501.85 476.3,501.52 476.9,501.02 477.5,500.15 478.1,499.75 478.7,501.34 479.3,501.95 479.9,501.93 480.5,501.90 481.1,501.66 481.7,501.68 482.3,501.08 482.9,500.57 483.5,500.95 484.1,500.70 484.7,499.85 485.3,499.78 485.9,499.81 486.5,500.46 487.1,500.29 487.7,499.77 488.3,499.76 488.9,500.91 489.5,501.03 490.1,500.88 490.7,500.63 491.3,500.61 491.9,500.98 492.5,501.54 493.1,500.26 493.7,500.59 494.3,500.51 494.9,500.15 495.5,501.28 496.1,500.95 496.7,501.43 497.3,501.37 497.9,500.10 498.5,499.81 499.1,500.05 499.7,499.84 500.3,498.40 500.9,498.25 501.5,498.61 502.1,498.43 502.7,499.68 503.3,499.66 503.9,499.14 504.5,498.73 505.1,498.24 505.7,497.92 506.3,498.22 506.9,498.65 507.5,498.45 508.1,498.34 508.7,497.59 509.3,497.97 509.9,497.81 510.5,498.05 511.1,497.67 511.7,497.47 512.3,497.77 512.9,497.32 513.5,498.77 514.1,498.78 514.7,498.33 515.3,497.58 515.9,498.30 516.5,499.02 517.1,498.83 517.7,497.57 518.3,497.02 518.9,497.53 519.5,497.52 520.1,497.00 520.7,496.55 521.3,496.54 521.9,497.07 522.5,497.16 523.1,497.41 523.7,499.04 524.3,500.51 524.9,498.69 525.5,497.81 526.1,497.41 526.7,497.15 527.3,497.87 527.9,497.55 528.5,497.04 529.1,496.64 529.7,496.62 530.3,497.67 530.9,498.17 531.5,496.75 532.1,496.00 532.7,495.52 533.3,496.44 533.9,496.91 534.5,497.47 535.1,497.09 535.7,495.27 536.3,495.48 536.9,496.02 537.5,496.58 538.1,495.59 538.7,495.52 539.3,495.20 539.9,494.93 540.5,495.50 541.1,496.05 541.7,495.43 542.3,491.15 542.9,492.71 543.5,490.70 544.1,495.23 544.7,495.95 545.3,494.39 545.9,495.82 546.5,494.72 547.1,496.52 547.7,497.41 548.3,497.05 548.9,496.36 549.5,494.99 550.1,494.48 550.7,494.53 551.3,494.42 551.9,494.89 552.5,495.00 553.1,495.44 553.7,496.55 554.3,496.85 554.9,496.53 555.5,495.69 556.1,494.17 556.7,494.11 557.3,494.98 557.9,494.61 558.5,495.62 559.1,495.44 559.7,495.47 560.3,495.03 560.9,493.99 561.5,495.56 562.1,494.91 562.7,495.33 563.3,494.83 563.9,494.84 564.5,494.23 565.1,493.96 565.7,494.84 566.3,496.37 566.9,495.41 567.5,494.72 568.1,492.08 568.7,494.46 569.3,494.76 569.9,494.13 570.5,494.48 571.1,494.83 571.7,495.55 572.3,495.45 572.9,494.03 573.5,494.17 574.1,493.47 574.7,494.13 575.3,495.43 575.9,495.67 576.5,494.67 577.1,492.79 577.7,494.83 578.3,493.60 578.9,493.25 579.5,494.57 580.1,494.58 580.7,494.50 581.3,494.10 581.9,492.84 582.5,492.74 583.1,493.66 583.7,494.36 584.3,494.41 584.9,492.88 585.5,493.94 586.1,494.96 586.7,495.72 587.3,496.26 587.9,495.26 588.5,494.16 589.1,494.20 589.7,495.53 590.3,494.29 590.9,493.88 591.5,493.58 592.1,494.37 592.7,495.77 593.3,495.49 593.9,494.18 594.5,494.08 595.1,494.18 595.7,493.41 596.3,494.47 596.9,494.60 597.5,495.27 598.1,494.39 598.7,495.16 599.3,494.29 599.9,495.10 600.5,494.04 601.1,495.16 601.7,495.19 602.3,494.06 602.9,494.03 603.5,494.77 604.1,494.46 604.7,494.34 605.3,494.87 605.9,495.05 606.5,493.00 607.1,493.08 607.7,494.37 608.3,495.34 608.9,496.27 609.5,495.57 610.1,496.99 610.7,497.17 611.3,496.56 611.9,496.55 612.5,496.65 613.1,496.15 613.7,495.21 614.3,495.74 614.9,496.08 615.5,494.59 616.1,493.81 616.7,494.74 617.3,495.53 617.9,496.07 618.5,496.56 619.1,496.50 619.7,497.34 620.3,496.57 620.9,495.83 621.5,495.98 622.1,496.66 622.7,497.25 623.3,498.07 623.9,497.23 624.5,497.47 625.1,497.46 625.7,496.35 626.3,496.09 626.9,497.80 627.5,498.43 628.1,497.60 628.7,495.37 629.3,494.94 629.9,495.30 630.5,496.31 631.1,498.65 631.7,499.23 632.3,498.73 632.9,497.27 633.5,496.03 634.1,496.13 634.7,496.42 635.3,499.09 635.9,498.86 636.5,497.71 637.1,498.05 637.7,497.94 638.3,496.83 638.9,497.70 639.5,497.65 640.1,496.63 640.7,496.96 641.3,497.67 641.9,497.60 642.5,498.06 643.1,498.58 643.7,497.69 644.3,495.97 644.9,494.57 645.5,495.53 646.1,497.74 646.7,499.17 647.3,500.01 647.9,500.63 648.5,499.63 649.1,499.36 649.7,497.64 650.3,497.86 650.9,498.39 651.5,498.45 652.1,498.13 652.7,497.39 653.3,497.78 653.9,499.16 654.5,499.08 655.1,499.25 655.7,498.61 656.3,498.64 656.9,497.74 657.5,498.40 658.1,498.64 658.7,499.22 659.3,498.71 659.9,497.55 660.5,497.61 661.1,499.43 661.7,501.51 662.3,500.79 662.9,500.72 663.5,500.85 664.1,500.61 664.7,498.40 665.3,498.54 665.9,498.00 666.5,499.71 667.1,500.92 667.7,501.25 668.3,497.94 668.9,498.28 669.5,499.65 670.1,498.70 670.7,499.79 671.3,500.10 671.9,499.78 672.5,498.90 673.1,497.97 673.7,498.07 674.3,502.07 674.9,502.49 675.5,501.68 676.1,500.03 676.7,498.95 677.3,498.65 677.9,498.43 678.5,500.17 679.1,500.59 679.7,501.62 680.3,500.34 680.9,501.13 681.5,501.26 682.1,501.89 682.7,501.64 683.3,500.49 683.9,501.79 684.5,501.60 685.1,501.40 685.7,500.57 686.3,501.10 686.9,501.24 687.5,501.92 688.1,502.57 688.7,501.89 689.3,500.43 689.9,501.32 690.5,503.05 691.1,504.05 691.7,502.51 692.3,505.24 692.9,503.19 693.5,503.43 694.1,503.66 694.7,503.03 695.3,503.00 695.9,503.90 696.5,503.22 697.1,501.42 697.7,501.48 698.3,502.38 698.9,501.04 699.5,500.83 700.1,502.36 700.7,502.95 701.3,503.25 701.9,501.94 702.5,502.96 703.1,505.09 703.7,504.59 704.3,502.98 704.9,501.35 705.5,502.57 706.1,503.29 706.7,502.62 707.3,503.90 707.9,504.73 708.5,504.89 709.1,502.37 709.7,501.90 710.3,505.02 710.9,502.23 711.5,503.43 712.1,505.21 712.7,505.95 713.3,504.26 713.9,502.63 714.5,503.47 715.1,504.73 715.7,505.80 716.3,506.29 716.9,505.07 717.5,503.58 718.1,501.23 718.7,502.41 719.3,505.64 719.9,505.23 720.5,503.89 721.1,504.05 721.7,504.31 722.3,502.71 722.9,501.96 723.5,501.42 724.1,504.39 724.7,504.26 725.3,504.86 725.9,506.49 726.5,507.67 727.1,507.69 727.7,507.55 728.3,504.51 728.9,502.89 729.5,502.06 730.1,502.28 730.7,505.69 731.3,504.09 731.9,503.98 732.5,502.53 733.1,503.95 733.7,505.54 734.3,504.57 734.9,505.89 735.5,505.23 736.1,505.51 736.7,504.91 737.3,503.40 737.9,502.46 738.5,502.37 739.1,501.30 739.7,503.57 740.3,505.78 740.9,504.91 741.5,503.20 742.1,501.73 742.7,500.92 743.3,499.96 743.9,499.84 744.5,501.92 745.1,502.82 745.7,502.67 746.3,502.78 746.9,503.62 747.5,503.80 748.1,503.83 748.7,502.41 749.3,501.49 749.9,500.58 750.5,500.77 751.1,500.45 751.7,500.55 752.3,500.92 752.9,501.13 753.5,501.14 754.1,500.83 754.7,502.40 755.3,502.12 755.9,500.71 756.5,500.84 757.1,500.06 757.7,499.37 758.3,500.22 758.9,499.34 759.5,496.76 760.1,498.42 760.7,501.35 761.3,500.54 761.9,499.74 762.5,500.80 763.1,499.30 763.7,498.82 764.3,498.51 764.9,499.39 765.5,498.38 766.1,500.16 766.7,500.87 767.3,501.34 767.9,500.85 768.5,498.41 769.1,498.48 769.7,498.02 770.3,498.94 770.9,498.94 771.5,499.15 772.1,499.40 772.7,500.50 773.3,501.30 773.9,499.79 774.5,499.23 775.1,500.69 775.7,501.05 776.3,499.62 776.9,498.89 777.5,498.43 778.1,499.54 778.7,499.65 779.3,499.71 779.9,501.58 780.5,499.43 781.1,497.39 781.7,495.56 782.3,494.75 782.9,497.10 783.5,498.73 784.1,500.74 784.7,498.24 785.3,496.62 785.9,498.39 786.5,499.93 787.1,500.54 787.7,500.57 788.3,499.56 788.9,498.63 789.5,498.16 790.1,498.83 790.7,498.45 791.3,498.35 791.9,499.46 792.5,497.71 793.1,496.18 793.7,496.68 794.3,496.62 794.9,496.44 795.5,498.52 796.1,498.53 796.7,496.99 797.3,497.18 797.9,499.21 798.5,497.13 799.1,495.19 799.7,495.00" fill="none" stroke="#3b3bff" stroke-width="1.2" stroke-linejoin="round"/>
 <polyline points="1134.4,498.55 1135.0,499.85 1135.6,500.52 1136.2,499.47 1136.8,498.74 1137.4,498.80 1138.0,499.18 1138.6,498.14 1139.2,498.10 1139.8,497.85 1140.4,496.37 1141.0,495.83 1141.6,494.90 1142.2,494.56 1142.8,496.78 1143.4,500.57 1144.0,503.00 1144.6,503.45 1145.2,503.79 1145.8,502.75 1146.4,500.20 1147.0,496.42 1147.6,495.71 1148.2,494.46 1148.8,492.81 1149.4,493.15 1150.0,495.06 1150.6,496.56 1151.2,498.87 1151.8,500.04 1152.4,500.45 1153.0,500.50 1153.6,499.51 1154.2,498.86 1154.8,500.25 1155.4,499.81 1156.0,499.33 1156.6,499.25 1157.2,498.58 1157.8,498.16 1158.4,496.70 1159.0,496.08 1159.6,496.50 1160.2,498.22 1160.8,500.02 1161.4,500.11 1162.0,498.80 1162.6,499.40 1163.2,500.15 1163.8,498.55 1164.4,497.34 1165.0,496.27 1165.6,495.82 1166.2,494.98 1166.8,495.19 1167.4,495.85 1168.0,496.78 1168.6,498.59 1169.2,499.70 1169.8,498.94 1170.4,496.94 1171.0,495.79 1171.6,496.80 1172.2,498.54 1172.8,498.96 1173.4,499.89 1174.0,500.25 1174.6,499.35 1175.2,498.84 1175.8,498.29 1176.4,497.05 1177.0,496.35 1177.6,496.62 1178.2,498.27 1178.8,498.33 1179.4,498.49 1180.0,498.48 1180.6,498.32 1181.2,497.19 1181.8,497.82 1182.4,499.28 1183.0,501.00 1183.6,501.46 1184.2,501.86 1184.8,501.37 1185.4,500.89 1186.0,499.49 1186.6,498.44 1187.2,497.47 1187.8,496.25 1188.4,495.75 1189.0,495.25 1189.6,494.92 1190.2,495.35 1190.8,495.91 1191.4,498.50 1192.0,501.21 1192.6,502.64 1193.2,502.67 1193.8,500.61 1194.4,498.88 1195.0,496.50 1195.6,495.11 1196.2,494.81 1196.8,495.31 1197.4,497.08 1198.0,497.72 1198.6,500.08 1199.2,500.37 1199.8,500.48 1200.4,498.53 1201.0,497.98 1201.6,496.68 1202.2,496.48 1202.8,496.79 1203.4,497.96 1204.0,499.08 1204.6,499.66 1205.2,499.32 1205.8,500.25 1206.4,499.67 1207.0,498.79 1207.6,497.62 1208.2,497.11 1208.8,496.24 1209.4,495.87 1210.0,496.61 1210.6,496.88 1211.2,497.63 1211.8,497.59 1212.4,498.70 1213.0,498.87 1213.6,499.98 1214.2,500.25 1214.8,499.47 1215.4,499.19 1216.0,499.43 1216.6,500.17 1217.2,500.86 1217.8,500.91 1218.4,498.92 1219.0,498.05 1219.6,497.26 1220.2,497.12 1220.8,498.08 1221.4,497.77 1222.0,498.47 1222.6,500.36 1223.2,500.88 1223.8,499.77 1224.4,499.41 1225.0,498.62 1225.6,498.51 1226.2,498.97 1226.8,497.40 1227.4,496.60 1228.0,495.00 1228.6,494.08 1229.2,494.85 1229.8,494.89 1230.4,494.88 1231.0,495.04 1231.6,495.86 1232.2,496.83 1232.8,497.64 1233.4,497.37 1234.0,496.36 1234.6,496.15 1235.2,495.44 1235.8,494.68 1236.4,495.33 1237.0,495.38 1237.6,494.97 1238.2,496.05 1238.8,496.70 1239.4,495.15 1240.0,494.01 1240.6,495.59 1241.2,498.93 1241.8,499.75 1242.4,499.69 1243.0,499.18 1243.6,498.23 1244.2,495.61 1244.8,495.08 1245.4,495.30 1246.0,495.47 1246.6,494.45 1247.2,493.85 1247.8,494.08 1248.4,494.59 1249.0,495.49 1249.6,495.84 1250.2,496.88 1250.8,497.70 1251.4,496.72 1252.0,495.47 1252.6,495.25 1253.2,494.90 1253.8,496.15 1254.4,496.36 1255.0,496.56 1255.6,496.97 1256.2,496.00 1256.8,496.43 1257.4,496.36 1258.0,495.63 1258.6,494.76 1259.2,493.27 1259.8,492.14 1260.4,493.83 1261.0,495.30 1261.6,496.07 1262.2,496.60 1262.8,497.14 1263.4,496.41 1264.0,495.66 1264.6,495.50 1265.2,496.30 1265.8,496.80 1266.4,498.08 1267.0,497.93 1267.6,496.91 1268.2,494.87 1268.8,493.93 1269.4,494.43 1270.0,494.87 1270.6,495.21 1271.2,494.73 1271.8,494.24 1272.4,494.00 1273.0,494.25 1273.6,495.61 1274.2,496.73 1274.8,497.70 1275.4,498.48 1276.0,497.62 1276.6,497.51 1277.2,496.82 1277.8,494.93 1278.4,493.47 1279.0,493.11 1279.6,492.31 1280.2,494.55 1280.8,495.94 1281.4,497.15 1282.0,496.24 1282.6,495.44 1283.2,495.07 1283.8,494.22 1284.4,494.16 1285.0,494.34 1285.6,494.90 1286.2,494.24 1286.8,494.44 1287.4,494.43 1288.0,493.84 1288.6,492.02 1289.2,491.64 1289.8,492.04 1290.4,494.92 1291.0,495.48 1291.6,496.70 1292.2,497.72 1292.8,497.66 1293.4,496.86 1294.0,496.08 1294.6,493.97 1295.2,494.03 1295.8,493.90 1296.4,493.38 1297.0,493.35 1297.6,491.44 1298.2,490.16 1298.8,489.72 1299.4,489.58 1300.0,491.35 1300.6,494.46 1301.2,496.12 1301.8,496.20 1302.4,495.87 1303.0,494.75 1303.6,494.01 1304.2,493.94 1304.8,493.74 1305.4,493.38 1306.0,493.42 1306.6,493.66 1307.2,494.43 1307.8,493.52 1308.4,492.26 1309.0,491.66 1309.6,492.40 1310.2,492.24 1310.8,493.62 1311.4,495.62 1312.0,495.64 1312.6,496.02 1313.2,493.93 1313.8,492.67 1314.4,491.04 1315.0,491.84 1315.6,493.57 1316.2,495.04 1316.8,495.05 1317.4,493.81 1318.0,493.45 1318.6,492.97 1319.2,493.50 1319.8,492.64 1320.4,492.85 1321.0,493.68 1321.6,492.39 1322.2,491.09 1322.8,490.62 1323.4,490.84 1324.0,490.50 1324.6,491.31 1325.2,491.63 1325.8,492.40 1326.4,491.81 1327.0,491.13 1327.6,492.11 1328.2,491.81 1328.8,492.21 1329.4,494.06 1330.0,495.67 1330.6,494.96 1331.2,495.97 1331.8,495.45 1332.4,495.40 1333.0,495.65 1333.6,494.98 1334.2,494.75 1334.8,492.14 1335.4,491.24 1336.0,491.63 1336.6,492.22 1337.2,493.12 1337.8,494.67 1338.4,496.03 1339.0,495.62 1339.6,495.46 1340.2,495.80 1340.8,495.48 1341.4,495.09 1342.0,492.54 1342.6,490.23 1343.2,490.29 1343.8,490.19 1344.4,491.88 1345.0,494.33 1345.6,494.75 1346.2,493.77 1346.8,493.06 1347.4,493.05 1348.0,493.91 1348.6,494.17 1349.2,494.22 1349.8,493.32 1350.4,493.17 1351.0,492.65 1351.6,493.48 1352.2,494.59 1352.8,493.66 1353.4,493.44 1354.0,492.53 1354.6,493.16 1355.2,492.86 1355.8,493.96 1356.4,495.36 1357.0,497.22 1357.6,497.47 1358.2,496.54 1358.8,496.14 1359.4,494.22 1360.0,492.97 1360.6,492.24 1361.2,492.24 1361.8,491.43 1362.4,490.34 1363.0,489.39 1363.6,491.33 1364.2,492.87 1364.8,494.50 1365.4,495.08 1366.0,494.82 1366.6,495.37 1367.2,493.35 1367.8,492.16 1368.4,491.33 1369.0,490.86 1369.6,490.17 1370.2,489.64 1370.8,489.62 1371.4,491.70 1372.0,492.94 1372.6,493.50 1373.2,493.74 1373.8,494.37 1374.4,495.35 1375.0,495.56 1375.6,495.14 1376.2,494.89 1376.8,493.77 1377.4,493.31 1378.0,494.52 1378.6,494.46 1379.2,493.54 1379.8,491.87 1380.4,491.56 1381.0,492.55 1381.6,493.15 1382.2,493.44 1382.8,494.66 1383.4,495.14 1384.0,495.58 1384.6,495.04 1385.2,495.44 1385.8,495.93 1386.4,495.52 1387.0,494.36 1387.6,495.62 1388.2,495.02 1388.8,493.64 1389.4,491.04 1390.0,491.06 1390.6,492.06 1391.2,493.21 1391.8,492.96 1392.4,493.23 1393.0,493.09 1393.6,492.46 1394.2,492.50 1394.8,493.35 1395.4,494.04 1396.0,494.17 1396.6,494.94 1397.2,495.45 1397.8,495.20 1398.4,495.34 1399.0,495.47 1399.6,496.04 1400.2,496.63 1400.8,497.00 1401.4,496.09 1402.0,496.26 1402.6,496.74 1403.2,496.06 1403.8,496.34 1404.4,496.18 1405.0,494.98 1405.6,494.32 1406.2,493.19 1406.8,494.05 1407.4,493.90 1408.0,495.39 1408.6,495.53 1409.2,495.45 1409.8,496.40 1410.4,496.93 1411.0,495.49 1411.6,494.59 1412.2,492.94 1412.8,493.34 1413.4,493.45 1414.0,494.11 1414.6,494.86 1415.2,494.36 1415.8,494.76 1416.4,496.70 1417.0,496.81 1417.6,496.14 1418.2,495.98 1418.8,496.83 1419.4,496.35 1420.0,496.13 1420.6,496.26 1421.2,497.09 1421.8,496.60 1422.4,498.11 1423.0,499.96 1423.6,498.78 1424.2,496.71 1424.8,495.67 1425.4,494.74 1426.0,494.26 1426.6,494.58 1427.2,494.69 1427.8,494.75 1428.4,495.41 1429.0,495.73 1429.6,496.37 1430.2,497.54 1430.8,498.71 1431.4,498.73 1432.0,499.63 1432.6,498.85 1433.2,498.36 1433.8,498.90 1434.4,498.60 1435.0,498.40 1435.6,497.30 1436.2,495.97 1436.8,495.50 1437.4,495.88 1438.0,496.53 1438.6,497.38 1439.2,497.81 1439.8,497.56 1440.4,496.59 1441.0,495.91 1441.6,495.72 1442.2,495.81 1442.8,495.20 1443.4,496.21 1444.0,497.70 1444.6,498.34 1445.2,497.75 1445.8,497.89 1446.4,497.35 1447.0,496.59 1447.6,496.59 1448.2,496.12 1448.8,496.07 1449.4,495.78 1450.0,496.30 1450.6,496.98 1451.2,497.78 1451.8,498.18 1452.4,498.16 1453.0,497.95 1453.6,498.02 1454.2,496.87 1454.8,495.21 1455.4,494.73 1456.0,495.13 1456.6,495.59 1457.2,497.30 1457.8,498.40 1458.4,499.45 1459.0,499.24 1459.6,497.27 1460.2,494.89 1460.8,494.90 1461.4,495.45 1462.0,495.73 1462.6,497.15 1463.2,499.12 1463.8,499.77 1464.4,500.19 1465.0,499.12 1465.6,497.04 1466.2,494.48 1466.8,494.53 1467.4,494.01 1468.0,494.20 1468.6,495.10 1469.2,496.53 1469.8,495.93 1470.4,495.64 1471.0,495.16 1471.6,496.47 1472.2,497.13 1472.8,496.86 1473.4,497.98 1474.0,498.35 1474.6,498.67 1475.2,498.51 1475.8,497.76 1476.4,497.60 1477.0,496.69 1477.6,495.12 1478.2,494.22 1478.8,494.95 1479.4,495.61 1480.0,497.14 1480.6,498.43 1481.2,498.81 1481.8,499.26 1482.4,499.05 1483.0,498.49 1483.6,497.44 1484.2,496.57 1484.8,496.08 1485.4,496.82 1486.0,498.44 1486.6,499.68 1487.2,499.69 1487.8,498.73 1488.4,497.80 1489.0,496.54 1489.6,495.89 1490.2,495.54 1490.8,495.69 1491.4,494.29 1492.0,494.25 1492.6,495.49 1493.2,495.76 1493.8,497.57 1494.4,498.46 1495.0,498.03 1495.6,498.50 1496.2,497.52 1496.8,498.82 1497.4,498.39 1498.0,498.38 1498.6,498.99 1499.2,499.19 1499.8,498.67 1500.4,497.25 1501.0,496.19 1501.6,495.92 1502.2,496.75 1502.8,495.50 1503.4,495.62 1504.0,495.13 1504.6,494.84 1505.2,495.13 1505.8,495.25 1506.4,496.18 1507.0,495.56 1507.6,495.87 1508.2,495.45 1508.8,495.25 1509.4,495.43 1510.0,494.76 1510.6,495.18 1511.2,497.41 1511.8,497.84 1512.4,496.93 1513.0,497.38 1513.6,498.56 1514.2,496.95 1514.8,495.54 1515.4,494.31 1516.0,494.29 1516.6,494.73 1517.2,494.60 1517.8,494.62 1518.4,495.88 1519.0,495.89 1519.6,496.07 1520.2,496.59 1520.8,497.98 1521.4,498.42 1522.0,498.06 1522.6,496.43 1523.2,495.48 1523.8,496.03 1524.4,496.56 1525.0,497.51 1525.6,497.09 1526.2,496.98 1526.8,496.28 1527.4,495.10 1528.0,494.05 1528.6,494.77 1529.2,495.80 1529.8,496.09 1530.4,495.81 1531.0,496.10 1531.6,495.65 1532.2,496.12 1532.8,496.33 1533.4,495.65 1534.0,494.95 1534.6,493.78 1535.2,492.68 1535.8,492.36 1536.4,492.59 1537.0,493.14 1537.6,493.40 1538.2,493.48 1538.8,494.18 1539.4,493.75 1540.0,491.89 1540.6,493.01 1541.2,494.24 1541.8,495.22 1542.4,496.51 1543.0,497.56 1543.6,498.38 1544.2,498.45 1544.8,497.93 1545.4,497.02 1546.0,495.68 1546.6,494.51 1547.2,491.12 1547.8,491.52 1548.4,492.56 1549.0,492.99 1549.6,494.58 1550.2,494.92 1550.8,495.28 1551.4,494.60 1552.0,493.31 1552.6,493.79 1553.2,494.39 1553.8,493.56 1554.4,493.89 1555.0,494.95 1555.6,495.19 1556.2,495.67 1556.8,496.59 1557.4,497.39 1558.0,497.46 1558.6,497.22 1559.2,497.53 1559.8,496.97 1560.4,495.73 1561.0,494.47 1561.6,496.28 1562.2,496.01 1562.8,495.46 1563.4,493.48 1564.0,492.69 1564.6,492.69 1565.2,493.22 1565.8,494.56 1566.4,496.50 1567.0,497.23 1567.6,496.28 1568.2,494.90 1568.8,494.11 1569.4,493.31 1570.0,493.27 1570.6,494.12 1571.2,494.99 1571.8,497.02 1572.4,496.26 1573.0,495.54 1573.6,495.78 1574.2,494.83 1574.8,493.05 1575.4,494.26 1576.0,495.93 1576.6,497.04 1577.2,498.02 1577.8,496.94 1578.4,494.93 1579.0,495.10 1579.6,495.33 1580.2,494.20 1580.8,493.80 1581.4,495.26 1582.0,495.29 1582.6,494.11 1583.2,492.05 1583.8,491.80 1584.4,492.69 1585.0,493.54 1585.6,494.19 1586.2,494.75 1586.8,494.84 1587.4,494.68 1588.0,495.65 1588.6,496.23 1589.2,496.81 1589.8,495.39 1590.4,494.00 1591.0,494.55 1591.6,495.37 1592.2,496.77 1592.8,496.18 1593.4,496.26 1594.0,495.78 1594.6,495.58 1595.2,495.06 1595.8,494.33 1596.4,493.62 1597.0,493.86 1597.6,495.47 1598.2,495.76 1598.8,495.58 1599.4,494.89 1600.0,494.25 1600.6,495.00 1601.2,495.46 1601.8,495.22 1602.4,495.95 1603.0,496.73 1603.6,497.31 1604.2,497.46 1604.8,496.75 1605.4,496.87 1606.0,496.30 1606.6,496.18 1607.2,496.31 1607.8,497.30 1608.4,497.47 1609.0,497.88 1609.6,496.36 1610.2,495.64 1610.8,495.63 1611.4,495.95 1612.0,494.72 1612.6,495.13 1613.2,495.28 1613.8,495.19 1614.4,496.74 1615.0,497.35 1615.6,498.16 1616.2,496.78 1616.8,496.45 1617.4,496.43 1618.0,496.67 1618.6,496.02 1619.2,496.07 1619.8,496.09 1620.4,497.27 1621.0,497.33 1621.6,495.88 1622.2,496.09 1622.8,495.52 1623.4,495.35 1624.0,496.21 1624.6,498.11 1625.2,499.17 1625.8,499.56 1626.4,499.05 1627.0,498.15 1627.6,497.16 1628.2,496.72 1628.8,495.78 1629.4,495.71 1630.0,496.89 1630.6,497.65 1631.2,497.72 1631.8,498.07 1632.4,497.24 1633.0,496.50 1633.6,497.96 1634.2,499.10 1634.8,499.70 1635.4,499.13 1636.0,497.62 1636.6,495.73 1637.2,495.09 1637.8,496.34 1638.4,497.23 1639.0,498.35 1639.6,498.41 1640.2,498.17 1640.8,498.05 1641.4,500.01 1642.0,500.40 1642.6,499.00 1643.2,498.43 1643.8,497.79 1644.4,497.74 1645.0,497.06 1645.6,497.49 1646.2,497.21 1646.8,497.44 1647.4,497.30 1648.0,496.74 1648.6,497.13 1649.2,497.82 1649.8,496.61 1650.4,496.79 1651.0,497.78 1651.6,498.47 1652.2,498.90 1652.8,499.02 1653.4,498.96 1654.0,498.31 1654.6,498.62 1655.2,499.52 1655.8,498.89 1656.4,498.30 1657.0,497.15 1657.6,496.40 1658.2,497.19 1658.8,497.90 1659.4,498.49 1660.0,498.41 1660.6,500.05 1661.2,501.28 1661.8,501.31 1662.4,500.52 1663.0,500.69 1663.6,500.94 1664.2,500.47 1664.8,499.38 1665.4,497.53 1666.0,497.72 1666.6,499.28 1667.2,501.63 1667.8,502.15 1668.4,501.95 1669.0,499.22 1669.6,497.90 1670.2,496.69 1670.8,495.86 1671.4,495.47 1672.0,495.43 1672.6,495.86 1673.2,497.25 1673.8,497.79 1674.4,497.97 1675.0,498.05 1675.6,499.70 1676.2,500.79 1676.8,500.17 1677.4,499.85 1678.0,500.47 1678.6,500.04 1679.2,499.82 1679.8,500.06 1680.4,498.58 1681.0,497.77 1681.6,497.38 1682.2,498.06 1682.8,499.51 1683.4,499.60 1684.0,498.09 1684.6,496.92 1685.2,496.68 1685.8,496.53 1686.4,497.16 1687.0,496.97 1687.6,497.66 1688.2,498.80 1688.8,500.83 1689.4,501.12 1690.0,501.20 1690.6,499.85 1691.2,498.10 1691.8,496.58 1692.4,496.15 1693.0,495.59 1693.6,494.72 1694.2,497.03 1694.8,498.48 1695.4,499.26 1696.0,499.56 1696.6,499.03 1697.2,498.36 1697.8,498.84 1698.4,499.17 1699.0,499.95 1699.6,499.00 1700.2,498.64 1700.8,497.65 1701.4,496.33 1702.0,496.75 1702.6,497.66 1703.2,498.92 1703.8,499.94 1704.4,498.55 1705.0,498.14 1705.6,499.42 1706.2,499.96 1706.8,500.53 1707.4,501.29 1708.0,502.19 1708.6,499.68 1709.2,497.64 1709.8,496.61 1710.4,496.38 1711.0,497.69 1711.6,497.70 1712.2,496.07 1712.8,496.07 1713.4,496.58 1714.0,498.23 1714.6,500.05 1715.2,500.88 1715.8,501.63 1716.4,500.11 1717.0,498.70 1717.6,496.82 1718.2,497.68 1718.8,498.20 1719.4,499.30 1720.0,500.02 1720.6,500.52 1721.2,500.96 1721.8,501.30 1722.4,501.24 1723.0,500.46 1723.6,499.98 1724.2,497.83 1724.8,496.13 1725.4,496.98 1726.0,498.35 1726.6,498.10 1727.2,497.13 1727.8,496.08 1728.4,495.93 1729.0,497.27 1729.6,498.38 1730.2,499.63 1730.8,499.02 1731.4,498.45 1732.0,498.28 1732.6,498.58 1733.2,499.28 1733.8,499.54 1734.4,500.00 1735.0,500.75 1735.6,500.88 1736.2,499.35 1736.8,497.74 1737.4,496.43 1738.0,497.51 1738.6,499.02 1739.2,499.78 1739.8,499.40 1740.4,498.49 1741.0,499.11 1741.6,499.17 1742.2,498.57 1742.8,497.63 1743.4,497.90 1744.0,496.84 1744.6,496.35 1745.2,497.21 1745.8,498.71" fill="none" stroke="#3b3bff" stroke-width="1.2" stroke-linejoin="round"/>
 <rect x="188" y="468" width="612.5" height="232" fill="none" stroke="#7a7a7a" stroke-width="2"/>
 <rect x="1134.5" y="468" width="612" height="232" fill="none" stroke="#000" stroke-width="2"/>
 <g font-size="12.4" fill="#555"><text x="184" y="702.8" text-anchor="end" textLength="7.3" lengthAdjust="spacingAndGlyphs">0</text>
<text x="184" y="655.8" text-anchor="end" textLength="29.4" lengthAdjust="spacingAndGlyphs">2000</text>
<text x="184" y="608.7" text-anchor="end" textLength="29.4" lengthAdjust="spacingAndGlyphs">4000</text>
<text x="184" y="561.6" text-anchor="end" textLength="29.4" lengthAdjust="spacingAndGlyphs">6000</text>
<text x="184" y="514.6" text-anchor="end" textLength="29.4" lengthAdjust="spacingAndGlyphs">8000</text>
<text x="188.5" y="714.8" text-anchor="middle" textLength="7.3" lengthAdjust="spacingAndGlyphs">0</text>
<text x="248.5" y="714.8" text-anchor="middle" textLength="22.0" lengthAdjust="spacingAndGlyphs">100</text>
<text x="308.5" y="714.8" text-anchor="middle" textLength="22.0" lengthAdjust="spacingAndGlyphs">200</text>
<text x="368.5" y="714.8" text-anchor="middle" textLength="22.0" lengthAdjust="spacingAndGlyphs">300</text>
<text x="428.5" y="714.8" text-anchor="middle" textLength="22.0" lengthAdjust="spacingAndGlyphs">400</text>
<text x="488.5" y="714.8" text-anchor="middle" textLength="22.0" lengthAdjust="spacingAndGlyphs">500</text>
<text x="548.5" y="714.8" text-anchor="middle" textLength="22.0" lengthAdjust="spacingAndGlyphs">600</text>
<text x="608.5" y="714.8" text-anchor="middle" textLength="22.0" lengthAdjust="spacingAndGlyphs">700</text>
<text x="668.5" y="714.8" text-anchor="middle" textLength="22.0" lengthAdjust="spacingAndGlyphs">800</text>
<text x="728.5" y="714.8" text-anchor="middle" textLength="22.0" lengthAdjust="spacingAndGlyphs">900</text>
<text x="788.5" y="714.8" text-anchor="middle" textLength="29.4" lengthAdjust="spacingAndGlyphs">1000</text></g>
 <g font-size="12.4" fill="#555"><text x="1130" y="702.8" text-anchor="end" textLength="7.3" lengthAdjust="spacingAndGlyphs">0</text>
<text x="1130" y="656.3" text-anchor="end" textLength="29.4" lengthAdjust="spacingAndGlyphs">2000</text>
<text x="1130" y="609.8" text-anchor="end" textLength="29.4" lengthAdjust="spacingAndGlyphs">4000</text>
<text x="1130" y="563.3" text-anchor="end" textLength="29.4" lengthAdjust="spacingAndGlyphs">6000</text>
<text x="1130" y="516.8" text-anchor="end" textLength="29.4" lengthAdjust="spacingAndGlyphs">8000</text>
<text x="1134.5" y="714.8" text-anchor="middle" textLength="7.3" lengthAdjust="spacingAndGlyphs">0</text>
<text x="1194.5" y="714.8" text-anchor="middle" textLength="22.0" lengthAdjust="spacingAndGlyphs">100</text>
<text x="1254.5" y="714.8" text-anchor="middle" textLength="22.0" lengthAdjust="spacingAndGlyphs">200</text>
<text x="1314.5" y="714.8" text-anchor="middle" textLength="22.0" lengthAdjust="spacingAndGlyphs">300</text>
<text x="1374.5" y="714.8" text-anchor="middle" textLength="22.0" lengthAdjust="spacingAndGlyphs">400</text>
<text x="1434.5" y="714.8" text-anchor="middle" textLength="22.0" lengthAdjust="spacingAndGlyphs">500</text>
<text x="1494.5" y="714.8" text-anchor="middle" textLength="22.0" lengthAdjust="spacingAndGlyphs">600</text>
<text x="1554.5" y="714.8" text-anchor="middle" textLength="22.0" lengthAdjust="spacingAndGlyphs">700</text>
<text x="1614.5" y="714.8" text-anchor="middle" textLength="22.0" lengthAdjust="spacingAndGlyphs">800</text>
<text x="1674.5" y="714.8" text-anchor="middle" textLength="22.0" lengthAdjust="spacingAndGlyphs">900</text>
<text x="1734.5" y="714.8" text-anchor="middle" textLength="29.4" lengthAdjust="spacingAndGlyphs">1000</text></g>
 <rect x="693.5" y="478.5" width="15" height="11" fill="#fff" stroke="#cfcfcf" stroke-width="1"/>
 <rect x="695.5" y="480.5" width="11" height="7" fill="#0000ff"/>
 <text x="712.5" y="487.7" font-size="13" fill="#7c7c7c" textLength="78.5" lengthAdjust="spacingAndGlyphs">aida02 1.8.W</text>
 <rect x="1639.5" y="478.5" width="15" height="11" fill="#fff" stroke="#cfcfcf" stroke-width="1"/>
 <rect x="1641.5" y="480.5" width="11" height="7" fill="#0000ff"/>
 <text x="1658.5" y="487.7" font-size="13" fill="#000" textLength="79" lengthAdjust="spacingAndGlyphs">aida04 3.8.W</text>
 <path d="M799 457.5L810 468.8L799 480L788 468.8Z" fill="#ff0000"/>
 <path d="M1745 457.5L1756 468.8L1745 480L1734 468.8Z" fill="#00ff00"/>
</svg>

<!-- ================= bottom ================= -->
<div class="btn" style="left:7px;top:1007px;width:111px">Empty Log Window</div>
<div class="btn" style="left:123px;top:1007px;width:148px">Send Log Window to ELog</div>
<div class="btn" style="left:275px;top:1007px;width:45px">Reload</div>
<div class="btn" style="left:324px;top:1007px;width:39px">Reset</div>
<div class="btn" style="left:367px;top:1007px;width:89px">Show Variables</div>
<div class="btn" style="left:461px;top:1007px;width:107px">Show Log Window</div>
<div class="btn" style="left:573px;top:1007px;width:88px">Enable Logging</div>
<div class="btn" style="left:1781px;top:1007px;width:120px">How to use this page</div>
<div class="lab" style="left:1580.5px;top:1040px;font-size:18.18px">Last Updated: November 15, 2023 12:14:13</div>
<div class="hr" style="top:1074px"></div>

<div id="scroll"></div><div id="thumb"></div>
</body></html>
